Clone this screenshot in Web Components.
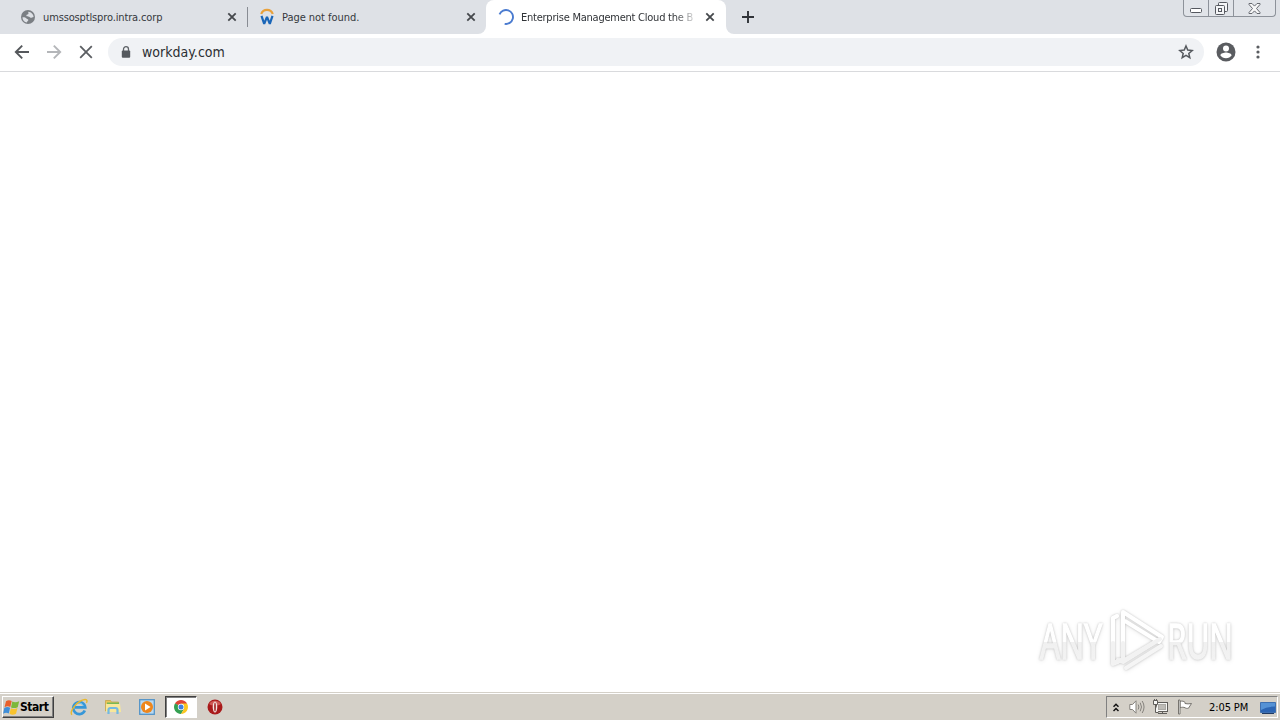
<!DOCTYPE html>
<html lang="en">
<head>
<meta charset="utf-8">
<title>Enterprise Management Cloud</title>
<style>
  body {
    margin: 0;
    width: 1280px;
    height: 720px;
    overflow: hidden;
    background: #fff;
    font-family: "DejaVu Sans Condensed", "DejaVu Sans", sans-serif;
  }
</style>
</head>
<body>
<desktop-screen></desktop-screen>
<script>
const icons = {
  globe: `<svg width="16" height="16" viewBox="0 0 16 16"><circle cx="8" cy="8" r="7" fill="#7b7f84"/><path d="M2.400 8.400c1.500-.3 3.300.2 4.100 1.100.8.900 2 .5 1.800 1.700-.2 1-1.300 1-1.500 2.200C4.500 13.200 2.500 11 2.400 8.400zM8.300 2.700c-.2 1.200.7 1.900-.2 2.600-.9.600-1.900.4-1.700 1.400.2 1 1.700.5 2.600 1 .9.500 1.500 1.200 2.600 1 .8-.2 1.300-.6 2-.6-.1-2.900-2.500-5.300-5.300-5.400z" fill="#dee1e6"/></svg>`,
  workday: `<svg width="16" height="18" viewBox="0 0 16 18"><path d="M2.200 6C3.200 3.200 5.300 1.900 8 1.900s4.800 1.300 5.800 4.100" fill="none" stroke="#e9a13b" stroke-width="2.200"/><path d="M2.500 7.800L5.200 15.800 8 8.800l2.800 7 2.700-8" fill="none" stroke="#1a66b8" stroke-width="2.200" stroke-linejoin="bevel"/></svg>`,
  spinner: `<svg width="16" height="16" viewBox="0 0 16 16"><path d="M1.400 5.600A7 7 0 1 1 7 14.900" transform="rotate(3 8 8)" fill="none" stroke="#4a7bd0" stroke-width="1.900"/></svg>`,
  close: `<svg width="10" height="10" viewBox="0 0 10 10"><path d="M1.300 1.300l7.400 7.400M8.700 1.300L1.300 8.700" stroke="#45484c" stroke-width="1.800"/></svg>`,
  plus: `<svg width="12" height="12" viewBox="0 0 12 12"><path d="M6 0v12M0 6h12" stroke="#303338" stroke-width="1.900"/></svg>`,
  back: `<svg width="16" height="16" viewBox="0 0 16 16"><path d="M15 8H2M8.200 1.600L1.800 8l6.400 6.400" fill="none" stroke="#55585c" stroke-width="1.900"/></svg>`,
  forward: `<svg width="16" height="16" viewBox="0 0 16 16"><path d="M1 8h13M7.800 1.600L14.200 8l-6.400 6.400" fill="none" stroke="#b4b6b9" stroke-width="1.900"/></svg>`,
  stop: `<svg width="16" height="16" viewBox="0 0 16 16"><path d="M2.200 2.200l11.600 11.600M13.800 2.200L2.200 13.800" stroke="#5b5e62" stroke-width="1.800"/></svg>`,
  lock: `<svg width="10" height="12" viewBox="0 0 10 12"><path d="M2.500 5V3.200a2.500 2.500 0 0 1 5 0V5" fill="none" stroke="#5f6368" stroke-width="1.300"/><rect x=".8" y="4.500" width="8.400" height="7.300" rx="1" fill="#55595e"/></svg>`,
  star: `<svg width="16" height="16" viewBox="0 0 16 16"><path d="M8 2l1.750 4.100 4.400.4-3.350 2.900 1 4.300L8 11.400l-3.800 2.300 1-4.300-3.350-2.900 4.400-.4z" fill="none" stroke="#55595e" stroke-width="1.500"/></svg>`,
  person: `<svg width="20" height="20" viewBox="0 0 20 20"><circle cx="10" cy="10" r="9.500" fill="#5a5c60"/><circle cx="10" cy="6.500" r="3" fill="#fff"/><path d="M4.300 13.300c.3-2 3.800-2.900 5.700-2.900s5.400.9 5.700 2.900C14.400 15.300 12.400 16.300 10 16.300s-4.400-1-5.700-3z" fill="#fff"/></svg>`,
  dots: `<svg width="4" height="14" viewBox="0 0 4 14" fill="#5a5d61"><circle cx="2" cy="2" r="1.600"/><circle cx="2" cy="7" r="1.600"/><circle cx="2" cy="12" r="1.600"/></svg>`,
  minimize: `<svg width="12" height="5" viewBox="0 0 12 5"><rect x=".5" y=".5" width="11" height="4" rx="1" fill="#fff" stroke="#55585f"/></svg>`,
  restore: `<svg width="13" height="13" viewBox="0 0 13 13" fill="#f4f5f7" stroke="#55585f"><rect x="3.500" y=".5" width="9" height="9" rx="1"/><rect x=".5" y="3.500" width="9" height="9" rx="1"/><rect x="3.500" y="6.500" width="3" height="3"/></svg>`,
  cross: `<svg width="13" height="11" viewBox="0 0 13 11"><path d="M1 .5h3l2.500 2.600L9 .5h3v1L8.500 5.500 12 9.500v1H9L6.500 7.900 4 10.500H1v-1l3.500-4L1 1.500z" fill="#f7f7f8" stroke="#666970"/></svg>`,
  windows: `<svg width="17" height="17" viewBox="0 0 17 17"><path d="M3 2.200C5 .8 6.900 1 8.700 2L7.300 8C5.500 7 3.700 7 1.500 8.200z" fill="#e8602c"/><path d="M9.300 2.400c2 1 4 1 6.900-.2l-1.500 6c-2.600 1.200-4.500 1.100-6.700.2z" fill="#7db83a"/><path d="M1.300 9c2-1.200 3.900-1.200 5.800-.2L5.800 14.500c-1.900-1-3.600-1-5.700.2z" fill="#3f8ed8"/><path d="M7.900 9.200c2 .9 4.100 1 6.600-.2l-1.500 5.800c-2.400 1.200-4.400 1.100-6.500 0z" fill="#f8c32d"/></svg>`,
  explorer: `<svg width="18" height="18" viewBox="0 0 18 18"><path d="M14.800 12.500A6 6 0 1 1 15.200 9.300H5" fill="none" stroke="#3797d8" stroke-width="2.700"/><path d="M5 8.200A4.300 4.300 0 0 1 13.300 8" fill="none" stroke="#7bc8f2"/><path d="M2 16.700C-1.500 14 7.500 2.200 15 1.500c2.600-.2 2.200 2.200 1.400 3.400" fill="none" stroke="#e9b82c" stroke-width="1.400"/></svg>`,
  folder: `<svg width="18" height="16" viewBox="0 0 18 16"><path d="M1.500 1.500h5l1 1.500h7v9h-13z" fill="#eac65a" stroke="#c4a044" stroke-width=".7"/><path d="M3 3.500h12v2H3z" fill="#77b757"/><path d="M2 5h14l1 8H2z" fill="#f8e79a"/><path d="M4.500 15v-4c0-1.300.8-2 2-2h5c1.200 0 2 .7 2 2v4" fill="none" stroke="#72b9e2" stroke-width="2.200"/></svg>`,
  player: `<svg width="16" height="16" viewBox="0 0 16 16"><rect x=".7" y=".7" width="14.600" height="14.600" fill="#b9d9f2" stroke="#5394c8" stroke-width="1.300"/><circle cx="8" cy="8" r="6" fill="#ee861c"/><path d="M6 4.500L11.600 8 6 11.500z" fill="#fff"/></svg>`,
  chrome: `<svg width="14" height="14" viewBox="0 0 14 14"><path d="M7 7L.94 3.500A7 7 0 0 1 13.060 3.500z" fill="#df4436"/><path d="M7 7L.94 3.500A7 7 0 0 0 7 14l3-5z" fill="#35a052"/><path d="M7 7L13.060 3.500A7 7 0 0 1 7 14l3-5z" fill="#fbc620"/><path d="M7 3.500h6.060L10 8.800z" fill="#fbc620"/><path d="M.94 3.500L4 8.800 7 7z" fill="#35a052"/><circle cx="7" cy="7" r="3.200" fill="#fff"/><circle cx="7" cy="7" r="2.500" fill="#3f7fe0"/></svg>`,
  opera: `<svg width="16" height="16" viewBox="0 0 16 16"><circle cx="8" cy="8" r="7.500" fill="#a91a1b"/><path d="M2.200 5A6.800 6.800 0 0 1 13.800 5C12 7 4 7 2.200 5z" fill="#cf5a56"/><ellipse cx="8" cy="8" rx="2.300" ry="5.500" fill="#f4e5e2"/><ellipse cx="8" cy="8" rx=".8" ry="4.500" fill="#9c1817"/></svg>`,
  chevrons: `<svg width="6" height="9" viewBox="0 0 6 9"><path d="M.5 3.700L3 1.200l2.500 2.500M.5 8L3 5.500 5.500 8" fill="none" stroke="#111" stroke-width="1.500"/></svg>`,
  speaker: `<svg width="16" height="16" viewBox="0 0 16 16" fill="none" stroke="#85827d"><path d="M.8 5.500h2.700L7 1.800v12.400l-3.500-3.700H.8z" fill="#fff"/><path d="M9.200 5.500q1.400 2.500 0 5M11.200 3.700q2.600 4.300 0 8.600M13.200 2q3.700 6 0 12"/></svg>`,
  network: `<svg width="17" height="16" viewBox="0 0 17 16" fill="#f6f6f4" stroke="#5f5d59"><rect x="4.500" y="3.500" width="11" height="9"/><rect x="6.500" y="5.500" width="7" height="5" fill="#bdbbb6" stroke="#aaa8a3"/><path d="M6 14.500h9M10.500 13v1"/><path d="M1.500 1.500h4v4h-4zM3.500 5.500v8h3" /><path d="M2.500 0v2M4.500 0v2"/></svg>`,
  flag: `<svg width="16" height="16" viewBox="0 0 16 16" fill="#fff" stroke="#77746f"><path d="M3 2.500c2.500-1 4 0 5 .8V4.500c2 .5 4 .5 6.500 0L11.500 9.200c-1.500.4-2.500.2-3.500-.5-1.500-.6-3-.6-5 0z"/><path d="M1.500 1h1.500v14H1.500z"/></svg>`,
  monitor: `<svg width="16" height="13" viewBox="0 0 16 13"><path d="M.5 1.500h15v10H.5z" fill="#2c65b3" stroke="#3f70b0"/><path d="M1 2h14v3.500Q7 5.500 1 9z" fill="#5592d5"/><path d="M2 12.500h12" stroke="#1f3a63"/></svg>`
};

class UiIcon extends HTMLElement {
  connectedCallback() {
    this.attachShadow({ mode: 'open' });
    this.shadowRoot.innerHTML = `
      <style>
        :host { display: inline-flex; flex: none; align-items: center; justify-content: center; }
        svg { display: block; }
      </style>
      ${icons[this.getAttribute('name')]}
    `;
  }
}

class BrowserTab extends HTMLElement {
  connectedCallback() {
    this.attachShadow({ mode: 'open' });
    this.shadowRoot.innerHTML = `
      <style>
        :host {
          display: flex;
          align-items: center;
          box-sizing: border-box;
          width: 239px;
          height: 34px;
          padding: 0 10px 0 12px;
          color: #35383d;
        }
        :host([active]) {
          width: 240px;
          padding-right: 11px;
          background: #fff;
          border-radius: 8px 8px 0 0;
          color: #303337;
        }
        .icon { width: 16px; }
        .title {
          flex: 1;
          margin: 0 11px 0 7px;
          padding-top: 1px;
          font-size: 11px;
          line-height: 18px;
          letter-spacing: var(--tracking, 0);
          white-space: nowrap;
          overflow: hidden;
        }
        :host([active]) .title {
          margin-right: 10px;
          -webkit-mask-image: linear-gradient(to right, #000 88%, transparent 102%);
          mask-image: linear-gradient(to right, #000 88%, transparent 102%);
        }
      </style>
      <ui-icon class="icon" name="${this.getAttribute('icon')}"></ui-icon>
      <span class="title"><slot></slot></span>
      <ui-icon name="close"></ui-icon>
    `;
  }
}

class WindowControls extends HTMLElement {
  connectedCallback() {
    this.attachShadow({ mode: 'open' });
    this.shadowRoot.innerHTML = `
      <style>
        :host {
          display: flex;
          box-sizing: border-box;
          width: 93px;
          height: 17px;
          border: 1px solid #8d929a;
          border-top: 0;
          border-radius: 0 0 4px 4px;
          background: #e1e4e9;
        }
        span { display: flex; justify-content: center; align-items: center; width: 24px; }
        span + span { border-left: 1px solid #8d929a; }
        span:last-child { flex: 1; }
        .min { padding-top: 4px; height: 11px; }
      </style>
      <span><ui-icon class="min" name="minimize"></ui-icon></span>
      <span><ui-icon name="restore"></ui-icon></span>
      <span><ui-icon name="cross"></ui-icon></span>
    `;
  }
}

class TabStrip extends HTMLElement {
  connectedCallback() {
    this.attachShadow({ mode: 'open' });
    this.shadowRoot.innerHTML = `
      <style>
        :host { display: flex; height: 34px; padding: 0 4px 0 8px; background: #dee1e6; }
        .divider { align-self: center; width: 1px; height: 20px; margin-right: -1px; background: #888c93; }
        .wrap { display: flex; margin-left: -8px; background: linear-gradient(#dee1e6 50%, #fff 50%); }
        .before, .after { width: 8px; background: #dee1e6; }
        .before { border-bottom-right-radius: 8px; }
        .after { border-bottom-left-radius: 8px; }
        .new { margin-left: 8px; }
        window-controls { margin-left: auto; }
      </style>
      <browser-tab icon="globe" style="--tracking: -0.14px">umssosptlspro.intra.corp</browser-tab>
      <div class="divider"></div>
      <browser-tab icon="workday" style="--tracking: -0.04px">Page not found.</browser-tab>
      <div class="wrap">
        <div class="before"></div>
        <browser-tab icon="spinner" active style="--tracking: -0.24px">Enterprise Management Cloud the B</browser-tab>
        <div class="after"></div>
      </div>
      <ui-icon class="new" name="plus"></ui-icon>
      <window-controls></window-controls>
    `;
  }
}

class BrowserToolbar extends HTMLElement {
  connectedCallback() {
    this.attachShadow({ mode: 'open' });
    this.shadowRoot.innerHTML = `
      <style>
        :host {
          display: flex;
          align-items: center;
          box-sizing: border-box;
          height: 38px;
          padding: 0 20px 1px 14px;
          border-bottom: 1px solid #d9dadd;
          background: #fff;
        }
        .nav { display: flex; gap: 16px; }
        .address {
          display: flex;
          flex: none;
          align-items: center;
          box-sizing: border-box;
          width: 1096px;
          height: 28px;
          margin-left: 14px;
          padding: 0 10px 0 13px;
          border-radius: 14px;
          background: #f0f2f5;
        }
        .url { flex: 1; margin-left: 11px; font-size: 14px; letter-spacing: 0.03px; color: #2b2e32; }
        .person { margin: 0 20px 0 12px; }
      </style>
      <div class="nav">
        <ui-icon name="back"></ui-icon>
        <ui-icon name="forward"></ui-icon>
        <ui-icon name="stop"></ui-icon>
      </div>
      <div class="address">
        <ui-icon name="lock"></ui-icon>
        <span class="url">workday.com</span>
        <ui-icon name="star"></ui-icon>
      </div>
      <ui-icon class="person" name="person"></ui-icon>
      <ui-icon name="dots"></ui-icon>
    `;
  }
}

class PageWatermark extends HTMLElement {
  connectedCallback() {
    this.attachShadow({ mode: 'open' });
    this.shadowRoot.innerHTML = `
      <style>
        :host { display: block; width: 249px; height: 90px; }
        svg { display: block; filter: drop-shadow(0 0 1.2px rgba(0,0,0,.2)) drop-shadow(0 1px 2px rgba(0,0,0,.09)); }
        text { font-family: "Open Sans", sans-serif; font-size: 50px; }
      </style>
      <svg width="249" height="90" viewBox="0 0 249 90">
        <defs>
          <linearGradient id="fade" x1="0" y1="0" x2="0" y2="76" gradientUnits="userSpaceOnUse">
            <stop offset=".52" stop-color="#fff"/>
            <stop offset=".52" stop-color="#f0f0f0"/>
            <stop offset="1" stop-color="#f5f5f5"/>
          </linearGradient>
        </defs>
        <g fill="url(#fade)" stroke="url(#fade)" stroke-width="1.600">
          <text x="9" y="57" textLength="62" lengthAdjust="spacingAndGlyphs">ANY</text>
          <text x="136" y="57" textLength="66" lengthAdjust="spacingAndGlyphs">RUN</text>
        </g>
        <g transform="translate(1 1)" fill="none" stroke-width="4" stroke-linejoin="round" stroke-linecap="round">
          <path d="M85 13l-4 2v46l5-2M94 65l35-22" stroke="#f5f5f5"/>
          <path d="M86 57l5 2 37-23" stroke="#f3f3f3"/>
          <path d="M81 38V15l4-2M91 57V9l39 25-3 5-34-21" stroke="#fff"/>
          <path d="M81 40v20l7-3M91 40v18l37-22" stroke="#f2f2f2"/>
        </g>
      </svg>
    `;
  }
}

class StartButton extends HTMLElement {
  connectedCallback() {
    this.attachShadow({ mode: 'open' });
    this.shadowRoot.innerHTML = `
      <style>
        :host {
          display: flex;
          align-items: center;
          box-sizing: border-box;
          width: 52px;
          height: 22px;
          border: 1px solid;
          border-color: #fff #404040 #404040 #fff;
          box-shadow: inset -1px -1px #808080;
          font-size: 12px;
          font-weight: bold;
          letter-spacing: -0.45px;
          color: #000;
        }
      </style>
      <ui-icon name="windows"></ui-icon><slot></slot>
    `;
  }
}

class SystemTray extends HTMLElement {
  connectedCallback() {
    this.attachShadow({ mode: 'open' });
    this.shadowRoot.innerHTML = `
      <style>
        :host {
          display: flex;
          align-items: center;
          box-sizing: border-box;
          width: 172px;
          height: 22px;
          padding-left: 6px;
          border: 1px solid;
          border-color: #808080 #fff #fff #808080;
        }
        .volume { margin-left: 10px; }
        .network { margin-left: 7px; }
        .flag { margin-left: 8px; }
        time { width: 40px; margin: 0 11px 0 16px; font-size: 11px; letter-spacing: -0.1px; white-space: nowrap; color: #000; }
      </style>
      <ui-icon name="chevrons"></ui-icon>
      <ui-icon class="volume" name="speaker"></ui-icon>
      <ui-icon class="network" name="network"></ui-icon>
      <ui-icon class="flag" name="flag"></ui-icon>
      <time>2:05 PM</time>
      <ui-icon name="monitor"></ui-icon>
    `;
  }
}

class TaskBar extends HTMLElement {
  connectedCallback() {
    this.attachShadow({ mode: 'open' });
    this.shadowRoot.innerHTML = `
      <style>
        :host {
          display: flex;
          align-items: center;
          box-sizing: border-box;
          height: 28px;
          padding: 1px 2px 0 2px;
          border-top: 1px solid #d4d0c8;
          box-shadow: inset 0 1px #fff;
          background: #d4d0c8;
        }
        .apps { display: flex; align-items: center; margin-left: 8px; }
        .apps ui-icon { width: 34px; height: 22px; }
        .apps .running {
          box-sizing: border-box;
          width: 32px;
          margin: 0 1px;
          border: 1px solid;
          border-color: #404040 #fff #fff #404040;
          box-shadow: inset 1px 1px #808080;
          background: #fff;
        }
        system-tray { margin-left: auto; }
      </style>
      <start-button>Start</start-button>
      <div class="apps">
        <ui-icon name="explorer"></ui-icon>
        <ui-icon name="folder"></ui-icon>
        <ui-icon name="player"></ui-icon>
        <ui-icon class="running" name="chrome"></ui-icon>
        <ui-icon name="opera"></ui-icon>
      </div>
      <system-tray></system-tray>
    `;
  }
}

class DesktopScreen extends HTMLElement {
  connectedCallback() {
    this.attachShadow({ mode: 'open' });
    this.shadowRoot.innerHTML = `
      <style>
        :host { display: flex; flex-direction: column; width: 1280px; height: 720px; }
        main { position: relative; flex: 1; background: #fff; }
        page-watermark { position: absolute; right: 0; bottom: 0; }
      </style>
      <tab-strip></tab-strip>
      <browser-toolbar></browser-toolbar>
      <main><page-watermark></page-watermark></main>
      <task-bar></task-bar>
    `;
  }
}

customElements.define('ui-icon', UiIcon);
customElements.define('browser-tab', BrowserTab);
customElements.define('window-controls', WindowControls);
customElements.define('tab-strip', TabStrip);
customElements.define('browser-toolbar', BrowserToolbar);
customElements.define('page-watermark', PageWatermark);
customElements.define('start-button', StartButton);
customElements.define('system-tray', SystemTray);
customElements.define('task-bar', TaskBar);
customElements.define('desktop-screen', DesktopScreen);
</script>
</body>
</html>
